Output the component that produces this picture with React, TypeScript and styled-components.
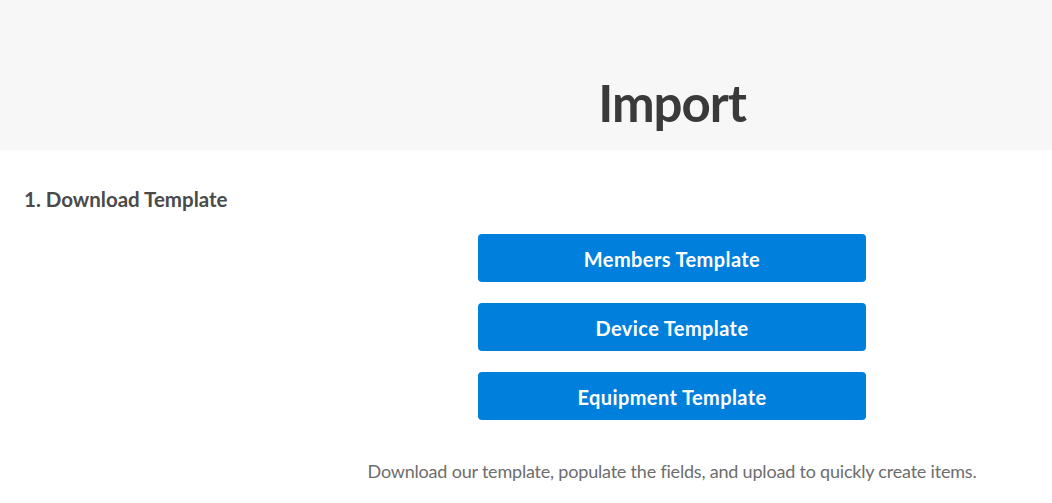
import styled, { createGlobalStyle } from "styled-components";

const GlobalStyle = createGlobalStyle`
  html, body {
    margin: 0;
    padding: 0;
    background: #ffffff;
    font-family: "Lato", "Noto Sans", sans-serif;
  }
`;

const templates = ["Members Template", "Device Template", "Equipment Template"];

const App = () => {
  return (
    <>
      <GlobalStyle />
      <Page>
        <Header>
          <Title>Import</Title>
        </Header>
        <Section>
          <StepLabel>1. Download Template</StepLabel>
          <Content>
            <ButtonList>
              {templates.map((name) => (
                <TemplateButton key={name}>{name}</TemplateButton>
              ))}
            </ButtonList>
            <Hint>
              Download our template, populate the fields, and upload to quickly
              create items.
            </Hint>
          </Content>
        </Section>
      </Page>
    </>
  );
};

export default App;

const Page = styled.div`
  width: 1052px;
  min-height: 503px;
  display: flex;
  flex-direction: column;
`;

const Header = styled.header`
  height: 150px;
  background: #f7f7f7;
  padding-left: 292px;
  box-sizing: border-box;
  display: flex;
  align-items: flex-end;
  justify-content: center;
`;

const Title = styled.h1`
  margin: 0 0 22px;
  font-size: 51px;
  font-weight: 700;
  color: #3a3a3a;
  letter-spacing: -1px;
  line-height: 1;
`;

const Section = styled.section`
  display: flex;
  flex-direction: column;
  padding: 37px 24px 0;
`;

const StepLabel = styled.h2`
  margin: 0;
  font-size: 20.5px;
  font-weight: 700;
  color: #4a4a4a;
  letter-spacing: 0;
  line-height: 24px;
`;

const Content = styled.div`
  display: flex;
  flex-direction: column;
  align-items: center;
  padding-left: 292px;
  margin-top: 23px;
`;

const ButtonList = styled.div`
  display: flex;
  flex-direction: column;
  gap: 21px;
`;

const TemplateButton = styled.button`
  width: 388px;
  height: 48px;
  padding-top: 3px;
  border: none;
  border-radius: 4px;
  background: #0080dc;
  color: #ffffff;
  font-family: inherit;
  font-size: 20px;
  font-weight: 700;
  letter-spacing: 0.4px;
  cursor: pointer;
`;

const Hint = styled.p`
  margin: 40px 0 0;
  font-size: 18px;
  color: #6d6d6d;
  letter-spacing: -0.2px;
`;
